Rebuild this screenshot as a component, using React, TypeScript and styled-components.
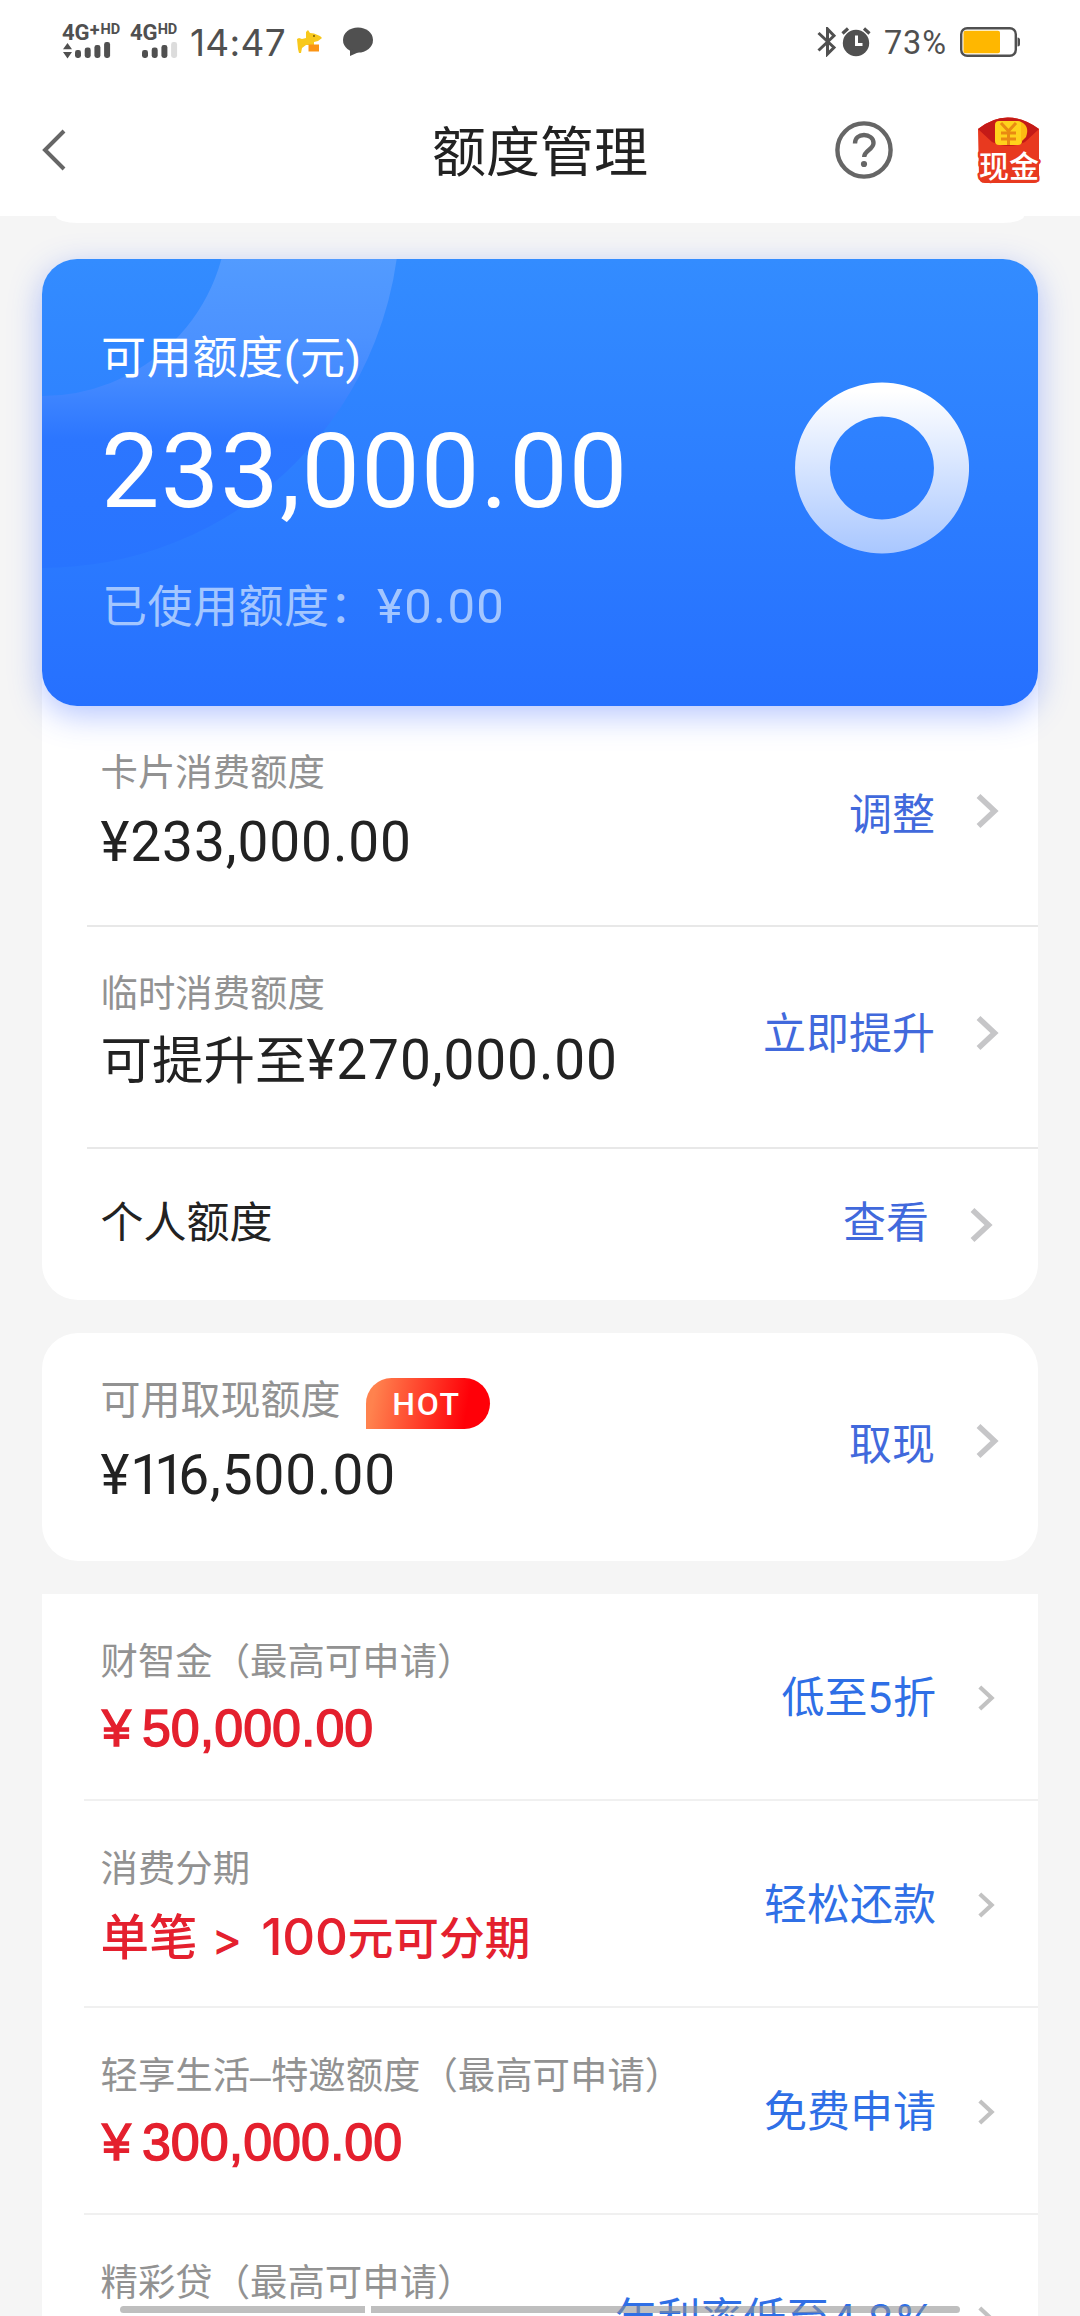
import React from 'react';
import styled, { createGlobalStyle } from 'styled-components';

const GlobalStyle = createGlobalStyle`
  * {
    box-sizing: border-box;
  }

  body {
    margin: 0;
    background: #f5f5f5;
    font-family: Roboto, 'Noto Sans CJK SC', sans-serif;
    color: #222;
  }
`;

const Page = styled.div`
  position: relative;
  width: 1080px;
  height: 2316px;
  overflow: hidden;
  background: #f5f5f5;
`;

const StatusBar = styled.div`
  display: flex;
  justify-content: space-between;
  height: 84px;
  padding: 0 60px 0 62px;
  background: #fff;
  color: #505050;

  svg {
    display: block;
    flex: none;
  }
`;

const StatusGroup = styled.div`
  display: flex;
  align-items: center;
  height: 84px;
`;

const Signal = styled.div<{ $width: number }>`
  width: ${p => p.$width}px;
  height: 36px;
  margin-right: 8px;
`;

const Network = styled.div`
  display: flex;
  height: 17px;
  font-size: 22px;
  line-height: 17px;
  font-weight: 700;
  white-space: nowrap;
`;

const Sup = styled.span<{ $size: number; $left?: number }>`
  margin-left: ${p => p.$left || 0}px;
  font-size: ${p => p.$size}px;
  line-height: 12px;
`;

const Clock = styled.div`
  width: 106px;
  margin: 1px 0 0 4px;
  font-family: Inter, sans-serif;
  font-size: 37px;
  line-height: 40px;
  letter-spacing: 0.3px;
`;

const ChatIcon = styled.svg`
  margin-left: 17px;
`;

const Percent = styled.div`
  width: 76px;
  margin: 2px 0 0 13px;
  font-size: 32.5px;
  line-height: 36px;
  letter-spacing: 0.8px;
`;

const NavBar = styled.div`
  display: flex;
  align-items: flex-start;
  height: 132px;
  padding-left: 41px;
  background: #fff;
`;

const BackIcon = styled.svg`
  margin-top: 44px;
`;

const Title = styled.h1`
  width: 216px;
  margin: 38px 0 0 365px;
  font-size: 54px;
  line-height: 64px;
  font-weight: 400;
  white-space: nowrap;
`;

const HelpIcon = styled.svg`
  margin: 37px 0 0 187px;
`;

const CashIcon = styled.svg`
  margin: 31px 0 0 78px;
`;

const PrevCard = styled.div`
  height: 7px;
  margin: 0 56px;
  border-radius: 0 0 22px 22px / 0 0 7px 7px;
  background: #fff;
`;

const Summary = styled.div`
  position: relative;
  z-index: 1;
  display: flex;
  justify-content: space-between;
  height: 447px;
  margin: 36px 42px 0;
  padding: 0 69px 0 59px;
  border-radius: 35px;
  background: linear-gradient(#338cff, #2670ff);
  box-shadow: 0 9px 32px rgba(50, 95, 255, 0.36);
  color: #fff;
`;

const Arc = styled.svg`
  position: absolute;
  left: 0;
  top: 0;
  border-radius: 35px 0 0 0;
`;

const SummaryText = styled.div`
  position: relative;
`;

const SummaryTitle = styled.div`
  margin-top: 70px;
  font-size: 45px;
  line-height: 60px;
  letter-spacing: 0.7px;
`;

const Total = styled.div`
  margin-top: 25px;
  font-size: 104px;
  line-height: 116px;
  letter-spacing: 1.2px;
`;

const Used = styled.div`
  margin-top: 47px;
  padding-left: 1px;
  font-size: 45px;
  line-height: 60px;
  letter-spacing: 0.5px;
  color: #a3c6ff;
  white-space: nowrap;
`;

const Ring = styled.svg`
  position: relative;
  margin-top: 123px;
`;

const Card = styled.div<{ $radius?: string; $tuck?: boolean; $gap?: number }>`
  margin: ${p => (p.$tuck ? -36 : p.$gap || 0)}px 42px 0;
  padding-top: ${p => (p.$tuck ? 36 : 0)}px;
  border-radius: ${p => p.$radius || 0};
  background: #fff;
`;

const RowBox = styled.div<{ $height: number; $inset: number; $line?: string }>`
  display: flex;
  justify-content: space-between;
  height: ${p => p.$height}px;
  margin-left: ${p => p.$inset}px;
  padding-left: ${p => 58.5 - p.$inset}px;
  border-bottom: ${p => (p.$line ? `2px solid ${p.$line}` : 'none')};
`;

const Info = styled.div<{ $top: number }>`
  padding-top: ${p => p.$top}px;
  white-space: nowrap;
`;

const Label = styled.div<{ $size?: number; $dark?: boolean }>`
  display: flex;
  height: 50px;
  font-size: ${p => p.$size || 37.4}px;
  line-height: 50px;
  color: ${p => (p.$dark ? '#222' : '#929292')};
`;

const Amount = styled.div<{ $gap: number; $red?: boolean }>`
  margin-top: ${p => p.$gap}px;
  font-size: ${p => (p.$red ? 51.5 : 55)}px;
  font-weight: ${p => (p.$red ? 500 : 400)};
  line-height: 60px;
  height: 60px;
  letter-spacing: ${p => (p.$red ? 0 : 0.9)}px;
  color: ${p => (p.$red ? '#e4202e' : '#222')};
`;

const Chars = styled.span<{ $size?: number; $space?: number; $inter?: boolean; $before?: number; $after?: number }>`
  font-size: ${p => (p.$size ? `${p.$size}px` : 'inherit')};
  letter-spacing: ${p => p.$space || 0}px;
  margin-left: ${p => p.$before || 0}px;
  margin-right: ${p => p.$after || 0}px;
  font-family: ${p => (p.$inter ? 'Inter, sans-serif' : 'inherit')};
`;

// Liberation has no medium weight, the stroke thickens the regular one
const RedDigits = styled.div`
  padding-left: 1.5px;
  margin-top: -2px;
  font-family: 'Liberation Sans', sans-serif;
  font-size: 52px;
  font-weight: 400;
  -webkit-text-stroke: 1.4px #e4202e;
`;

const Dash = styled.span`
  font-family: 'Liberation Sans', sans-serif;
`;

const Action = styled.div<{ $top: number; $right: number; $color: string }>`
  display: flex;
  align-items: center;
  height: 60px;
  margin-top: ${p => p.$top}px;
  padding-right: ${p => p.$right}px;
  font-size: 43px;
  line-height: 60px;
  color: ${p => p.$color};
  white-space: nowrap;
`;

const Arrow = styled.svg<{ $left: number; $shift: number }>`
  display: block;
  margin: ${p => p.$shift}px 0 ${p => -p.$shift}px ${p => p.$left}px;
`;

const Hot = styled.div`
  width: 124px;
  height: 51px;
  margin: 2px 0 0 25px;
  padding-right: 2px;
  border-radius: 26px 26px 26px 0;
  background: linear-gradient(100deg, #ff824e 8%, #ff0008 80%);
  color: #fff;
  font-size: 32px;
  font-weight: 500;
  line-height: 52px;
  letter-spacing: 1.6px;
  text-align: center;
`;

const GestureBar = styled.div`
  position: absolute;
  left: 120px;
  top: 2306px;
  display: flex;
  gap: 6px;
`;

const Gesture = styled.div<{ $width: number; $side: 'left' | 'right' }>`
  width: ${p => p.$width}px;
  height: 7px;
  border-radius: ${p => (p.$side === 'left' ? '4px 0 0 4px' : '0 4px 4px 0')};
  background: rgba(145, 145, 145, 0.58);
`;

type RowProps = {
  label: React.ReactNode;
  labelSize?: number;
  dark?: boolean;
  amount?: React.ReactNode;
  red?: boolean;
  action: React.ReactNode;
  height: number;
  top: number;
  gap?: number;
  actionTop: number;
  arrowShift?: number;
  right?: number;
  line?: string;
};

const Row = ({
  label, labelSize, dark, amount, red, action, height, top, gap = 0, actionTop, arrowShift = 0, right, line
}: RowProps) => (
  <RowBox $height={height} $inset={red ? 42 : 45} $line={line}>
    <Info $top={top}>
      <Label $size={labelSize} $dark={dark}>{label}</Label>
      {amount && <Amount $gap={gap} $red={red}>{amount}</Amount>}
    </Info>
    <Action $top={actionTop} $right={right ?? (red ? 43 : 38)} $color={red ? '#2f6fe6' : '#4169dc'}>
      {action}
      {red ? (
        <Arrow $left={42} $shift={arrowShift} width='17' height='28' viewBox='0 0 17 28' fill='none' stroke='#c2c2c2' strokeWidth='4.2'>
          <path d='M1.8 3 13.6 14 1.8 25' />
        </Arrow>
      ) : (
        <Arrow $left={41} $shift={arrowShift} width='24' height='36' viewBox='0 0 24 36' fill='none' stroke='#c6c6c8' strokeWidth='5.6'>
          <path d='M2.5 3 18.5 18 2.5 33' />
        </Arrow>
      )}
    </Action>
  </RowBox>
);

const Bars = ({ x, dim }: { x: number; dim?: boolean }) => (
  <g>
    {[8, 10.5, 13, 16].map((h, i) => (
      <rect key={h} x={x + i * 9.7} y={17 - h} width='6' height={h} rx='2.4' fill={dim && i === 3 ? '#dcdcdc' : '#505050'} />
    ))}
  </g>
);

const App = () => {
  return (
    <Page>
      <GlobalStyle />

      <StatusBar>
        <StatusGroup>
          <Signal $width={60}>
            <Network>4G<Sup $size={18}>+</Sup><Sup $size={14.5} $left={1}>HD</Sup></Network>
            <svg width='60' height='19' viewBox='0 0 60 19'>
              <path d='M1 8.2 5.5 2 10 8.2zM1 11 5.5 17.4 10 11z' fill='#505050' />
              <Bars x={13} />
            </svg>
          </Signal>
          <Signal $width={48}>
            <Network>4G<Sup $size={14.5}>HD</Sup></Network>
            <svg width='48' height='19' viewBox='0 0 48 19'>
              <Bars x={12} dim />
            </svg>
          </Signal>
          <Clock>14:47</Clock>
          <svg width='30' height='26' viewBox='0 0 30 26'>
            <path d='M10 3 12 1l2 3 4 .5L24 7l2 2-4 3-4 1v3h-8l-4 3-1 5H3L2 20 1 10l2-1 3 1 4-1z' fill='#f8c81c' />
            <path d='M12.5 15.5h10.500v7H12.5z' fill='#fb9414' />
            <circle cx='18' cy='7' r='0.9' fill='#6b4d00' />
          </svg>
          <ChatIcon width='30' height='30' viewBox='0 0 30 30'>
            <ellipse cx='15' cy='13' rx='15' ry='12.6' fill='#505050' />
            <path d='M7 22v7l9-4z' fill='#505050' />
          </ChatIcon>
        </StatusGroup>
        <StatusGroup>
          <svg width='24' height='30' viewBox='0 0 24 30' fill='none' stroke='#505050' strokeWidth='3'>
            <path d='M1.5 6 17 20.5 10.5 27V2L17 8.8 1.5 23.5' />
          </svg>
          <svg width='30' height='30' viewBox='0 0 30 30'>
            <circle cx='15' cy='16' r='13.2' fill='#505050' />
            <path d='M1.5 6.5 7 1.5M23 1.5l5.5 5' stroke='#505050' strokeWidth='3.2' />
            <path d='M15.5 8.5v9h6' fill='none' stroke='#fff' strokeWidth='3' />
          </svg>
          <Percent>73%</Percent>
          <svg width='60' height='30' viewBox='0 0 60 30'>
            <rect x='1.2' y='1.2' width='54.6' height='27.6' rx='6' fill='none' stroke='#505050' strokeWidth='2.4' />
            <rect x='3.5' y='3.8' width='36.5' height='22.4' rx='2' fill='#ffb700' />
            <path d='M57.5 10.5q2.5 0 2.5 2.5v4q0 2.5-2.5 2.5z' fill='#505050' />
          </svg>
        </StatusGroup>
      </StatusBar>

      <NavBar>
        <BackIcon width='26' height='44' viewBox='0 0 26 44' fill='none' stroke='#666' strokeWidth='4'>
          <path d='M23 3 4 22 23 41' />
        </BackIcon>
        <Title>额度管理</Title>
        <HelpIcon width='58' height='58' viewBox='0 0 58 58' fill='none' stroke='#666' strokeWidth='4.4'>
          <circle cx='29' cy='29' r='26.6' />
          <path d='M20 22.5C20 17 24 14 29 14s9.500 3 9.500 8c0 6.500-9.300 7.500-9.300 14' />
          <circle cx='29' cy='43' r='3.1' fill='#666' stroke='none' />
        </HelpIcon>
        <CashIcon width='72' height='72' viewBox='0 0 72 72'>
          <path d='M7 14Q36-9 68 14V63Q68 68 63 68H14Q8 68 8 62z' fill='#e8391f' />
          <path d='M7 14Q36-9 68 14L54 27Q38 35 21 27z' fill='#c41a17' />
          <rect x='24' y='6' width='27' height='24' rx='4' fill='#ffd21c' />
          <path d='M50 7q9 4 5 15l-5 5z' fill='#fdbb12' />
          <path d='M30 8l7.5 8L45 8M37.5 16v14M30 18h15M30 24h15' fill='none' stroke='#e98a12' strokeWidth='3' />
          <text x='8' y='62' fontSize='30' fontWeight='500' fill='#fff' stroke='#e8391f' strokeWidth='5' strokeLinejoin='round' paintOrder='stroke'>现金</text>
        </CashIcon>
      </NavBar>

      <PrevCard />

      <Summary>
        <Arc width='380' height='330' viewBox='0 0 380 330'>
          <defs>
            <linearGradient id='arc' gradientUnits='userSpaceOnUse' x1='0' y1='0' x2='0' y2='310'>
              <stop offset='0' stopColor='#529bff' />
              <stop offset='0.25' stopColor='#4c92ff' />
              <stop offset='0.4' stopColor='#4389ff' />
              <stop offset='0.58' stopColor='#2c76ff' />
              <stop offset='1' stopColor='#2874ff' />
            </linearGradient>
          </defs>
          <circle cx='0' cy='-49' r='272' fill='none' stroke='url(#arc)' strokeWidth='172' />
        </Arc>
        <SummaryText>
          <SummaryTitle>可用额度(元)</SummaryTitle>
          <Total>233,000.00</Total>
          <Used>已使用额度：<Chars $size={49} $space={1.4} $before={2}>¥0.00</Chars></Used>
        </SummaryText>
        <Ring width='174' height='172' viewBox='0 0 174 172'>
          <defs>
            <linearGradient id='ring' x1='0' y1='0' x2='0' y2='1'>
              <stop offset='0.05' stopColor='#fff' />
              <stop offset='1' stopColor='#a9c7ff' />
            </linearGradient>
          </defs>
          <path
            fill='url(#ring)'
            fillRule='evenodd'
            d='M87 0.5a87 85.5 0 1 0 .1 0zM87 34.5a52 51.5 0 1 1-.1 0z'
          />
        </Ring>
      </Summary>

      <Card $tuck $radius='0 0 36px 36px'>
        <Row
          label='卡片消费额度'
          amount='¥233,000.00'
          action='调整'
          height={221}
          top={42}
          gap={14}
          actionTop={79}
          arrowShift={-4}
          line='#e8e8e8'
        />
        <Row
          label='临时消费额度'
          amount={<><Chars $size={51.5}>可提升至</Chars>¥270,000.00</>}
          action='立即提升'
          height={222}
          top={42}
          gap={11}
          actionTop={77}
          arrowShift={-1}
          line='#e8e8e8'
        />
        <Row
          label='个人额度'
          labelSize={43}
          dark
          action='查看'
          height={151}
          top={49}
          actionTop={44}
          right={44}
          arrowShift={2}
        />
      </Card>

      <Card $gap={33} $radius='36px'>
        <Row
          label={<>可用取现额度<Hot>HOT</Hot></>}
          labelSize={40}
          amount={<>¥<Chars $space={-7}>11</Chars>6,500.00</>}
          action='取现'
          height={228}
          top={43}
          gap={19}
          actionTop={82}
          arrowShift={-4}
        />
      </Card>

      <Card $gap={33}>
        <Row
          label='财智金（最高可申请）'
          amount={<RedDigits><Chars $after={11}>¥</Chars>50,000.00</RedDigits>}
          action={<>低至<Chars $inter $size={42}>5</Chars>折</>}
          red
          height={207}
          top={43}
          gap={13}
          actionTop={74}
          line='#f0f0f0'
        />
        <Row
          label='消费分期'
          amount={
            <>
              <Chars $size={48.5} $after={14}>单笔</Chars>
              <Chars $inter $size={46} $after={19}>&gt;</Chars>
              <Chars $inter $size={51} $space={-0.2}>100</Chars>
              <Chars $size={45.7}>元可分期</Chars>
            </>
          }
          action='轻松还款'
          red
          height={207}
          top={43}
          gap={13}
          actionTop={74}
          line='#f0f0f0'
        />
        <Row
          label={<>轻享生活<Dash>–</Dash>特邀额度（最高可申请）</>}
          amount={<RedDigits><Chars $after={11}>¥</Chars>300,000.00</RedDigits>}
          action='免费申请'
          red
          height={207}
          top={43}
          gap={13}
          actionTop={74}
          line='#f0f0f0'
        />
        <Row
          label='精彩贷（最高可申请）'
          action={<>年利率低至<Chars $inter $size={43}>4.8%</Chars></>}
          red
          height={207}
          top={43}
          actionTop={74}
        />
      </Card>

      <GestureBar>
        <Gesture $width={245} $side='left' />
        <Gesture $width={589} $side='right' />
      </GestureBar>
    </Page>
  )
};

export default App;
